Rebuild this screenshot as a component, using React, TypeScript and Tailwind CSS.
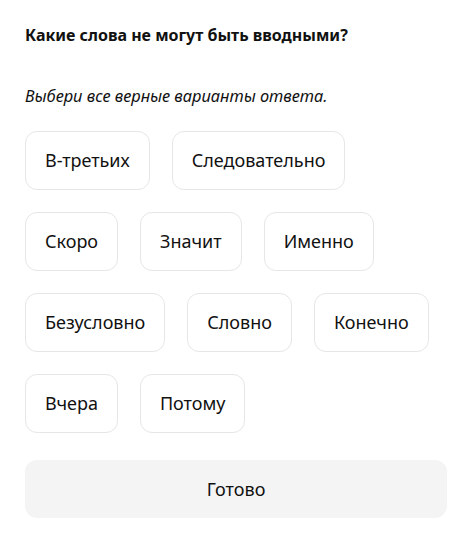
const rows = [
  ['В-третьих', 'Следовательно'],
  ['Скоро', 'Значит', 'Именно'],
  ['Безусловно', 'Словно', 'Конечно'],
  ['Вчера', 'Потому'],
]

export default function App() {
  return (
    <main className="min-h-[535px] bg-white px-[25px] pt-[23px] text-[#111] font-['Noto_Sans',sans-serif]">
      <h1 className="text-[16px] font-bold leading-[24px]">Какие слова не могут быть вводными?</h1>
      <p className="mt-[37px] text-[16.4px] italic leading-[24px]">Выбери все верные варианты ответа.</p>
      <div className="mt-[23px] flex flex-col gap-[22px]">
        {rows.map((row, i) => (
          <div key={i} className="flex gap-[22px]">
            {row.map((w) => (
              <button
                key={w}
                className="h-[59px] rounded-[12px] border border-[#e6e6e6] bg-white px-[19px] text-[18px] text-[#111]"
              >
                {w}
              </button>
            ))}
          </div>
        ))}
      </div>
      <button className="mt-[27px] h-[58px] w-[422px] rounded-[12px] bg-[#f4f4f4] text-[18px] text-[#111]">
        Готово
      </button>
    </main>
  )
}
